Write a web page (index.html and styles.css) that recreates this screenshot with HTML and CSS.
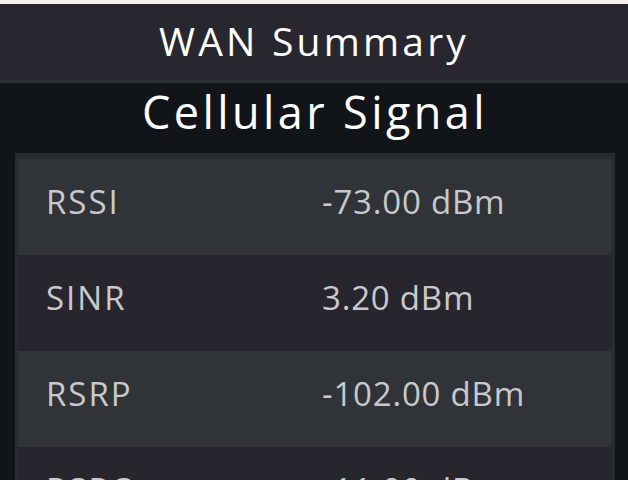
FILE: index.html
```html
<!DOCTYPE html>
<html lang="en">
<head>
<meta charset="utf-8">
<title>WAN Summary</title>
<link rel="stylesheet" href="styles.css">
</head>
<body>
<div class="top-strip"></div>
<header class="page-header">WAN Summary</header>
<main class="content">
  <h2 class="section-title">Cellular Signal</h2>
  <div class="signal-table">
    <div class="signal-row">
      <span class="signal-label">RSSI</span>
      <span class="signal-value">-73.00 dBm</span>
    </div>
    <div class="signal-row">
      <span class="signal-label">SINR</span>
      <span class="signal-value">3.20 dBm</span>
    </div>
    <div class="signal-row">
      <span class="signal-label">RSRP</span>
      <span class="signal-value">-102.00 dBm</span>
    </div>
    <div class="signal-row">
      <span class="signal-label">RSRQ</span>
      <span class="signal-value">-11.00 dBm</span>
    </div>
  </div>
</main>
</body>
</html>
```

FILE: styles.css
```css
html, body {
  margin: 0;
  padding: 0;
}

body {
  background: #111419;
  font-family: "Open Sans", "DejaVu Sans", sans-serif;
  color: #ffffff;
  overflow: hidden;
}

.top-strip {
  height: 4px;
  background: #f7f1ed;
}

.page-header {
  height: 79px;
  background: #28272f;
  border-bottom: 3px solid #2b3133;
  display: flex;
  align-items: center;
  justify-content: center;
  padding-bottom: 4px;
  box-sizing: border-box;
  font-size: 39px;
  letter-spacing: 3.2px;
  color: #ffffff;
}

.content {
  padding: 0 13px 0 15px;
}

.section-title {
  margin: 0;
  height: 70px;
  display: flex;
  align-items: center;
  justify-content: center;
  font-size: 45px;
  font-weight: 400;
  letter-spacing: 3.4px;
  padding-bottom: 14px;
  box-sizing: border-box;
}

.signal-table {
  background: #272c2f;
  padding: 6px 4px 0 3px;
}

.signal-row {
  display: grid;
  grid-template-columns: 276px 1fr;
  align-items: center;
  height: 96px;
  padding: 0 0 12px 28px;
  box-sizing: border-box;
  font-size: 33px;
  color: #c9c9cb;
}

.signal-row:nth-child(odd) {
  background: #303438;
}

.signal-row:nth-child(even) {
  background: #27262e;
}

.signal-label {
  letter-spacing: 2px;
}

.signal-value {
  letter-spacing: 0.8px;
}
```
